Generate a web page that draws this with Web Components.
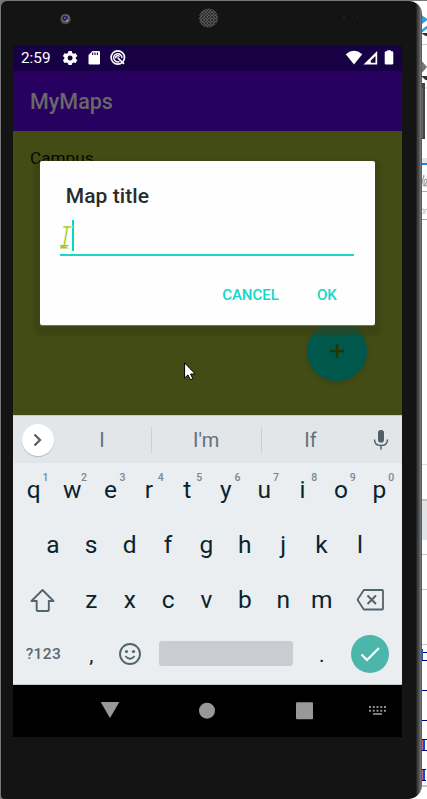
<!DOCTYPE html>
<html lang="en">
<head>
<meta charset="utf-8">
<title>MyMaps</title>
<style>
html,body{margin:0;height:799px;overflow:hidden;background:#fff;font-family:Roboto,"Liberation Sans",sans-serif}
</style>
</head>
<body>
<desktop-view></desktop-view>
<script>
function define(name, html) {
  const t = document.createElement('template');
  t.innerHTML = html;
  customElements.define(name, class extends HTMLElement {
    constructor() {
      super();
      this.attachShadow({mode: 'open'}).append(t.content.cloneNode(true));
    }
  });
}

/* Editor window showing at the right of the emulator */
define('editor-edge', `<style>:host{display:block;width:427px;height:799px}svg{display:block}</style>
<svg width="427" height="799" viewBox="0 0 427 799">
<rect width="427" height="799" fill="#fefefe"/>
<rect width="427" height="1" fill="#777"/><rect width="20" height="799" fill="#777"/>
<path d="M420 14l8 5.500-8 6z" fill="#3a9ad9"/><path d="M420 31l8-6v3l-6 4.500z" fill="#3a9ad9"/>
<path d="M421 33h6v3h-1.500z" fill="#333"/><path d="M420 44.500h7M420 88h7" stroke="#ccc"/>
<path d="M421 60l6 7-6 7z" fill="#777"/><path d="M421 76h6v4h-1.500z" fill="#333"/>
<path d="M421 83h4v56h-4z" fill="#444"/><path d="M422.500 88v50" stroke="#666"/>
<rect x="421" y="158" width="6" height="5" fill="#e4e4e4"/><rect x="421" y="163" width="6" height="2" fill="#1a84f0"/>
<path d="M421 191.500h6M421 219.500h6" stroke="#aaa"/>
<path d="M421 464.500h6" stroke="#ddd"/><rect x="421" y="499" width="6" height="41" fill="#e1e4e7"/>
<path d="M421 500h6" stroke="#c4c4c4" stroke-width="2"/>
<path d="M421 554.500h6M421 589.500h6M421 644.500h6" stroke="#c4c4c4"/>
<path d="M422 652.500h5M422 660.500h5M421 690.500h6M421 720.500h6M422 739.500h5M422 750.500h5M421 769.500h5M421 780.500h5" stroke="#000085"/>
<path d="M422.500 649v11M422.500 740v10M422.500 770v10" stroke="#c06a8c"/>
<path d="M422.500 649v11" stroke="#1a58d0"/>
<path d="M424 740v10M424 770v10" stroke="#1048d0" stroke-width="2"/>
<path d="M422 786h5" stroke="#c4c4c4" stroke-width="2"/>
<path d="M421 187l3-12m-1 11c4-2 5-7 3-7s-3 7-1 7 2-1 3-2" fill="none" stroke="#9da1a1" stroke-width="1.200"/>
<path d="M422 209c3-1 2 5 0 5m3-5v5m0-4l2-1" fill="none" stroke="#bbb"/>
</svg>`);

define('phone-shell', `<style>
:host{display:block;box-sizing:border-box;width:421px;height:798px;padding:44px 0 0 12px;border-radius:6px 13px 14px 4px;
background:linear-gradient(90deg,#141414 0 414px,#161616 415px,#343434 416px,#484848 417px,#4a4a4a 418px,#6c6c6c 419px,#707070 420px,#4a4a4a 421px);position:relative}
.top{position:absolute;left:0;top:0}
</style>
<svg class="top" width="415" height="44" viewBox="1 1 415 44">
<circle cx="65.500" cy="19" r="5.300" fill="#484848"/><circle cx="65.500" cy="18.500" r="3.800" fill="#777"/><circle cx="65.200" cy="18.300" r="2.800" fill="#242047"/><circle cx="65" cy="18" r="1.200" fill="#5652b8"/><circle cx="67" cy="20.500" r="1" fill="#aaa"/>
<defs><pattern id="m" width="3.200" height="3.200" patternUnits="userSpaceOnUse"><rect width="3.200" height="3.200" fill="#666"/><circle cx="1" cy="1" r="1.050" fill="#1c1c1c"/><circle cx="2.700" cy="2.600" r=".9" fill="#1c1c1c"/></pattern></defs>
<circle cx="208.500" cy="18" r="9.600" fill="url(#m)"/>
<circle cx="344" cy="18" r="1" fill="#2c2c2c"/><circle cx="357.500" cy="17" r=".8" fill="#2c2c2c"/>
</svg><slot></slot>`);

define('status-bar', `<style>
:host{display:flex;height:25.500px;background:#180045;color:#fff;font:400 15.300px/26.500px Roboto,sans-serif}
span{width:49px;box-sizing:border-box;padding-left:8px}svg{display:block}
</style>
<span>2:59</span>
<svg width="340" height="25" viewBox="62 45 340 25" fill="#fff">
<path fill-rule="evenodd" d="M68.500 51h3.200l.5 2 1.500.8 2-.6 1.600 2.700-1.500 1.500v1.400l1.500 1.500-1.600 2.700-2-.6-1.500.8-.5 1.800h-3.200l-.5-1.800-1.500-.8-2 .6-1.600-2.700 1.500-1.500v-1.400l-1.500-1.500 1.600-2.700 2 .6 1.500-.8zM70.100 55.600a2.500 2.500 0 1 0 .01 0z"/>
<path d="M92.500 51h6.300q1.200 0 1.200 1.200v11.100q0 1.200-1.200 1.200h-9.100q-1.200 0-1.200-1.200V55.100z"/>
<path d="M92.700 52.400v2.600M95 52.400v2.600M97.400 52.400v2.600" stroke="#180045" stroke-width="1.100"/>
<g fill="none" stroke="#fff"><circle cx="117.800" cy="57.500" r="6.700" stroke-width="1.700"/><path d="M119.500 61.500a4.100 4.100 0 1 1 2.400-3.500" stroke-width="1.500"/><path d="M117.500 57.500l6.500 6.300" stroke-width="1.700"/><path d="M116 58.300a1.900 1.900 0 0 1 3.500-1.500" stroke-width="1.400"/></g>
<path d="M345.800 54.200q8.200-6.800 16.400 0L354 64.500z"/>
<path fill-rule="evenodd" d="M377.200 51v13.500H363.500zM375.500 56v6.800h-4.700v-2.200z"/>
<path d="M386 51.200h1.200v-1h3.600v1h1.200q1.300 0 1.300 1.200v10.900q0 1.200-1.300 1.200h-6q-1.300 0-1.300-1.200V52.400q0-1.200 1.300-1.200z"/>
</svg>`);

define('app-bar', `<style>
:host{display:flex;align-items:center;height:60.500px;box-sizing:border-box;padding:2px 0 0 17px;background:#28005f;color:#686868;font:500 21.500px/30px Roboto,sans-serif}
</style><slot></slot>`);

define('map-list', `<style>
:host{display:block;height:284px;box-sizing:border-box;padding:15px 17px;background:#424c14;color:#060700;font:400 17.200px/24px Roboto,sans-serif}
</style><slot></slot>`);

define('add-button', `<style>
:host{position:absolute;left:293.500px;top:275.500px;width:60.500px;height:60.500px;border-radius:50%;background:#00584d;box-shadow:0 2px 3px 1px #38421588;display:grid;place-items:center}
</style><svg width="14" height="14"><path d="M7 0v14M0 7h14" stroke="#273600" stroke-width="2.600"/></svg>`);

define('title-dialog', `<style>
:host{position:absolute;left:26.700px;top:116px;width:335px;height:163.500px;box-sizing:border-box;padding:21px 21px 0 20.500px;background:#fefefe;border-radius:2px;display:flex;flex-direction:column;box-shadow:0 1px 1px #d0d5bd60,0 5px 3px 5px #38421690,0 3px 6px 1px #29370f40}
h1{margin:0 0 0 5.500px;font:500 21px/28px Roboto,sans-serif;letter-spacing:.08px;color:#2b2b2b;white-space:nowrap}
.f{height:46px;border-bottom:2px solid #1cd5c4;padding:10px 0 0 12px;box-sizing:border-box}
i{display:block;width:2px;height:31px;background:#00d9c5}
.a{display:flex;justify-content:flex-end;padding:28px 17px 0 0;gap:38px;font:500 15px/22px Roboto,sans-serif;color:#12d8c6}
</style><h1>Map title</h1><div class="f"><i></i></div><div class="a"><span>CANCEL</span><span>OK</span></div>`);

/* The typed letter, in a thin calligraphic face */
define('typed-letter', `<style>
:host{position:absolute;left:47px;top:178px;width:13px;height:29px;display:block}
span{position:absolute;left:-1px;top:0;font:400 29px/29px "DejaVu Sans Mono",monospace;color:#9bc51c;transform:scaleX(.74) skewX(-13deg);transform-origin:0 50%;-webkit-text-stroke:.8px #fefefe}
svg{position:absolute;left:0;top:0}
</style><span>I</span><svg width="13" height="29"><path d="M0 25.500q0-2.500 3-2.500t6 2.500z" fill="#9acb20"/></svg>`);

define('mouse-pointer', `<style>:host{position:absolute;left:171px;top:317px;display:block}</style>
<svg width="13" height="19" viewBox="0 0 13 19"><path d="M.6.900v15.200l3.400-3.200 2.300 4.800 2.500-1.100-2.200-4.600h4.700z" fill="#fff" stroke="#000" stroke-width="1"/></svg>`);

define('suggestion-bar', `<style>
:host{display:flex;align-items:center;height:48px;box-sizing:border-box;border-top:1px solid #c6c9c5;background:#e2e6e9;color:#62707a;font:400 20px/28px Roboto,sans-serif}
.c{width:32px;height:32px;margin-left:8.500px;border-radius:50%;background:#fff;box-shadow:0 1px 1px #b3b8bb;display:grid;place-items:center}
span{box-sizing:border-box;width:109.500px;text-align:center;padding-top:1px}span:first-of-type{width:97px}span:last-of-type{width:97px}
u{width:1px;height:26px;background:#ccd0d3}
svg{display:block}.mic{margin-left:13.500px}
</style><div class="c"><svg width="12" height="14"><path d="M2.500 1.500L8 7l-5.500 5.500" fill="none" stroke="#575d60" stroke-width="2.200"/></svg></div>
<span>I</span><u></u><span>I'm</span><u></u><span>If</span>
<svg class="mic" width="16" height="20"><rect x="5" y="0" width="6" height="12.500" rx="2.800" fill="#4e6069"/><path d="M1.500 9.500q0 6 6.500 6t6.500-6M8 15v4.500" fill="none" stroke="#4e6069" stroke-width="1.500"/></svg>`);

customElements.define('key-cap', class extends HTMLElement {
  constructor() {
    super();
    this.attachShadow({mode: 'open'}).innerHTML = `<style>
:host{display:grid;place-items:center;width:38.400px;height:54.500px;position:relative;flex:none}
small{position:absolute;left:26px;top:8px;font:500 10.500px/13px Roboto,sans-serif;color:#7c878d;width:10px;text-align:center}
</style><slot></slot>`;
  }
  connectedCallback() {
    const hint = this.getAttribute('hint');
    if (hint) {
      const s = document.createElement('small');
      s.textContent = hint;
      this.shadowRoot.append(s);
    }
  }
});

const letters = (keys, hints = '') => [...keys].map((k, i) =>
  `<key-cap${hints[i] ? ` hint="${hints[i]}"` : ''}>${k}</key-cap>`).join('');

define('soft-keyboard', `<style>
:host{display:block;height:222px;box-sizing:border-box;background:#eaeef1;color:#0b232c;font:400 24.500px/28px Roboto,sans-serif;border-bottom:1px solid #c3c9c8}
.r{display:flex;height:54.500px;padding-left:1.600px}.r2{padding-left:20.600px}.r3{position:relative;top:.7px}
.w{width:57.600px}.r svg{display:block}
.sym{width:57.600px;font-size:15.500px;font-weight:500;letter-spacing:.35px;color:#5a6870}
.sp{width:153.600px}.sp div{width:134px;height:25px;border-radius:3px;background:#c9ccd0}
.p{padding-top:3px;box-sizing:border-box;font-size:21px}
</style>
<div class="r">${letters('qwertyuiop', '1234567890')}</div>
<div class="r r2">${letters('asdfghjkl')}</div>
<div class="r r3"><key-cap class="w"><svg width="28" height="26"><path d="M13.500 3L24.500 14h-4.700v9q0 1-1 1H8.700q-1 0-1-1v-9H2.500z" fill="none" stroke="#53636c" stroke-width="1.900" stroke-linejoin="round"/></svg></key-cap>${letters('zxcvbnm')}
<key-cap class="w"><svg width="28" height="24"><path d="M7.800 2H26q1 0 1 1v17.500q0 1-1 1H7.800L1.500 11.800z" fill="none" stroke="#53636c" stroke-width="1.800" stroke-linejoin="round"/><path d="M11.500 7.500l8.500 8.500M20 7.500L11.500 16" stroke="#53636c" stroke-width="2"/></svg></key-cap></div>
<div class="r"><key-cap class="sym">?123</key-cap><key-cap class="p">,</key-cap>
<key-cap><svg width="24" height="24" fill="#53636c"><circle cx="12" cy="12" r="10" fill="none" stroke="#53636c" stroke-width="1.900"/><circle cx="8.500" cy="9.500" r="1.600"/><circle cx="15.500" cy="9.500" r="1.600"/><path d="M7.300 14q4.700 5.500 9.400 0" fill="none" stroke="#53636c" stroke-width="1.800"/></svg></key-cap>
<key-cap class="sp"><div></div></key-cap><key-cap class="p">.</key-cap>
<key-cap class="w"><svg width="38" height="38"><circle cx="19" cy="19" r="19" fill="#4cb6aa"/><path d="M10.500 19.500l5.500 5.500L28 13" fill="none" stroke="#fff" stroke-width="2.200"/></svg></key-cap></div>`);

define('nav-bar', `<style>:host{display:block;height:52px;background:#000}svg{display:block}</style>
<svg width="389" height="52" viewBox="13 685 389 52" fill="#989898">
<path d="M101.500 702h17q.8 0 .4.800l-8.400 14.500q-.5.700-1 0l-8.400-14.500q-.4-.8.400-.8z"/><circle cx="207" cy="710.700" r="8"/><rect x="296" y="702.200" width="17" height="17" rx="1"/>
<path d="M369 707h17M369 710.700h17" stroke="#8e8e8e" stroke-width="2" stroke-dasharray="2 1.750"/><path d="M373 714h9" stroke="#8e8e8e" stroke-width="1.700"/></svg>`);

define('desktop-view', `<style>
:host{display:grid;width:427px;height:799px;overflow:hidden}
:host>*,editor-edge,phone-shell{grid-area:1/1}phone-shell{margin:1px 0 0 1px}
.screen{width:389px;height:692px;position:relative}
</style><editor-edge></editor-edge>
<phone-shell><div class="screen"><status-bar></status-bar><app-bar>MyMaps</app-bar><map-list>Campus</map-list><suggestion-bar></suggestion-bar><soft-keyboard></soft-keyboard><nav-bar></nav-bar>
<add-button></add-button><title-dialog></title-dialog><typed-letter></typed-letter><mouse-pointer></mouse-pointer></div></phone-shell>`);
</script>
</body>
</html>
